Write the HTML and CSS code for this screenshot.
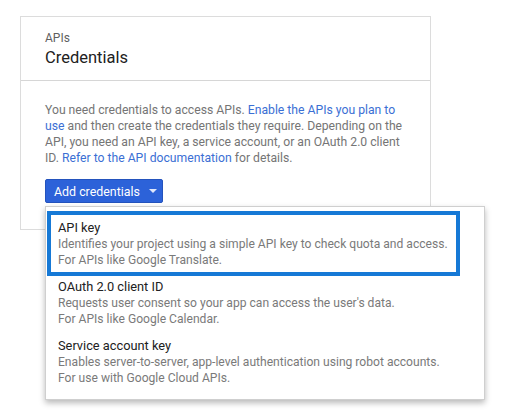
FILE: index.html
```html
<!DOCTYPE html>
<html>
<head>
<meta charset="utf-8">
<link rel="stylesheet" href="styles.css">
</head>
<body>
<div class="stage">
  <div class="card">
    <div class="card-head">
      <div class="crumb">APIs</div>
      <div class="title">Credentials</div>
    </div>
    <div class="card-body">
      <p class="intro">You need credentials to access APIs. <a class="lnk">Enable the APIs you plan to use</a> and then create the credentials they require. Depending on the API, you need an API key, a service account, or an OAuth 2.0 client ID. <a class="lnk">Refer to the API documentation</a> for details.</p>
      <div class="btn"><span class="btn-label">Add credentials</span><span class="caret"></span></div>
    </div>
  </div>
  <div class="menu">
    <div class="item selected">
      <div class="item-title">API key</div>
      <div class="item-desc">Identifies your project using a simple API key to check quota and access.</div>
      <div class="item-desc">For APIs like Google Translate.</div>
    </div>
    <div class="item">
      <div class="item-title">OAuth 2.0 client ID</div>
      <div class="item-desc">Requests user consent so your app can access the user's data.</div>
      <div class="item-desc">For APIs like Google Calendar.</div>
    </div>
    <div class="item">
      <div class="item-title">Service account key</div>
      <div class="item-desc">Enables server-to-server, app-level authentication using robot accounts.</div>
      <div class="item-desc">For use with Google Cloud APIs.</div>
    </div>
  </div>
</div>
</body>
</html>
```
FILE: styles.css
```css
html, body {
  margin: 0;
  padding: 0;
  background: #fff;
}
body {
  font-family: Roboto, "Liberation Sans", Arial, sans-serif;
  width: 506px;
  height: 420px;
  overflow: hidden;
}
.stage {
  position: relative;
  padding: 16px 0 0 20px;
}
.card {
  width: 409px;
  height: 212px;
  border: 1px solid #dcdcdc;
  background: #fff;
}
.card-head {
  height: 64px;
  border-bottom: 1px solid #d6d6d6;
  padding: 0 0 0 24px;
  box-sizing: border-box;
  padding-top: 13px;
}
.crumb {
  font-size: 12px;
  line-height: 16px;
  color: #5f5f5f;
}
.title {
  font-size: 16.5px;
  line-height: 24px;
  color: #212121;
}
.card-body {
  padding: 21px 0 0 24px;
}
.intro {
  margin: 0;
  width: 366px;
  font-size: 12.2px;
  line-height: 16px;
  color: #757575;
}
.lnk {
  color: #3b6fd4;
}
.btn {
  margin-top: 13px;
  display: inline-flex;
  align-items: center;
  height: 24px;
  width: 118px;
  box-sizing: border-box;
  padding-left: 8px;
  background: #2c62d9;
  color: #fff;
  font-size: 12.4px;
  white-space: nowrap;
  border-radius: 2px;
  border: 1px solid #2453bd;
}
.caret {
  margin-left: 9px;
  width: 0;
  height: 0;
  border-left: 4px solid transparent;
  border-right: 4px solid transparent;
  border-top: 4px solid #dfe7fb;
}
.menu {
  position: absolute;
  left: 45px;
  top: 206px;
  width: 438px;
  height: 186px;
  padding-top: 6px;
  border: 1px solid #cfcfcf;
  background: #fff;
  box-shadow: 0 3px 6px rgba(0,0,0,0.28);
}
.item {
  position: relative;
  height: 59px;
  box-sizing: border-box;
  padding: 6px 0 0 12px;
}
.item.selected::after {
  content: "";
  position: absolute;
  left: 1px;
  top: -2px;
  width: 413px;
  height: 65px;
  box-sizing: border-box;
  border: 4px solid #1679d6;
}
.item-title {
  font-size: 12.8px;
  line-height: 17px;
  color: #212121;
}
.item-desc {
  font-size: 12.1px;
  line-height: 16px;
  color: #7a7a7a;
}
```
